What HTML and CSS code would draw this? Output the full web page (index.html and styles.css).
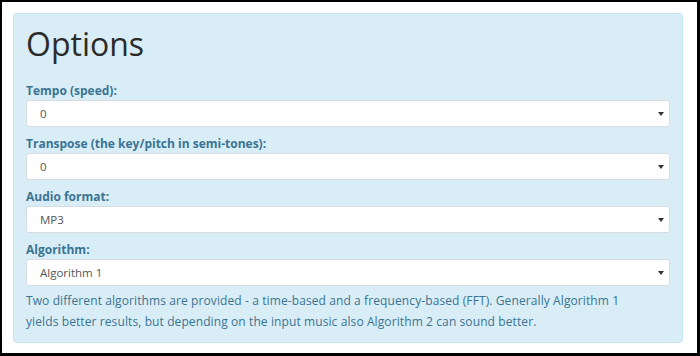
FILE: index.html
```html
<!DOCTYPE html>
<html>
<head>
<meta charset="utf-8">
<link rel="stylesheet" href="styles.css">
</head>
<body>
<div class="frame">
  <div class="panel">
    <h1 class="title">Options</h1>
    <div class="field">
      <label class="label">Tempo (speed):</label>
      <div class="select-wrap"><select class="select"><option>0</option></select></div>
    </div>
    <div class="field">
      <label class="label">Transpose (the key/pitch in semi-tones):</label>
      <div class="select-wrap"><select class="select"><option>0</option></select></div>
    </div>
    <div class="field">
      <label class="label">Audio format:</label>
      <div class="select-wrap"><select class="select"><option>MP3</option></select></div>
    </div>
    <div class="field last">
      <label class="label">Algorithm:</label>
      <div class="select-wrap"><select class="select"><option>Algorithm 1</option></select></div>
    </div>
    <p class="help">Two different algorithms are provided - a time-based and a frequency-based (FFT). Generally Algorithm 1 yields better results, but depending on the input music also Algorithm 2 can sound better.</p>
  </div>
</div>
</body>
</html>
```
FILE: styles.css
```css
html, body {
  margin: 0;
  padding: 0;
  background: #fff;
}
.frame {
  box-sizing: border-box;
  width: 700px;
  height: 356px;
  border-style: solid;
  border-color: #000;
  border-width: 2px 3px 3px 2px;
  padding: 11px 0 0 11px;
  background: #fff;
  font-family: "Open Sans", "Noto Sans", sans-serif;
}
.panel {
  box-sizing: border-box;
  width: 670px;
  background: #d9edf7;
  border: 1px solid #c4e3f0;
  border-radius: 4px;
  padding: 13px 12px 10px 12px;
}
.title {
  margin: 0 0 22px 0;
  font-size: 32px;
  line-height: 33px;
  font-weight: 400;
  color: #2b2b2b;
}
.field {
  margin-bottom: 8px;
}
.field.last {
  margin-bottom: 4px;
}
.label {
  display: block;
  font-size: 12px;
  line-height: 18px;
  font-weight: 700;
  color: #3a7493;
}
.select-wrap {
  position: relative;
}
.select-wrap::after {
  content: "";
  position: absolute;
  right: 6px;
  top: 12px;
  border-left: 3px solid transparent;
  border-right: 3px solid transparent;
  border-top: 4px solid #333;
}
.select {
  display: block;
  box-sizing: border-box;
  width: 100%;
  height: 27px;
  margin: 0;
  padding: 0 20px 0 13px;
  font-family: "Open Sans", "Noto Sans", sans-serif;
  font-size: 11.5px;
  color: #555;
  background: #fff;
  border: 1px solid #d6dde1;
  border-radius: 3px;
  -webkit-appearance: none;
  appearance: none;
  outline: none;
}
.help {
  margin: 0;
  padding-right: 20px;
  font-size: 12px;
  letter-spacing: 0.1px;
  line-height: 21px;
  color: #3a7493;
}
```
